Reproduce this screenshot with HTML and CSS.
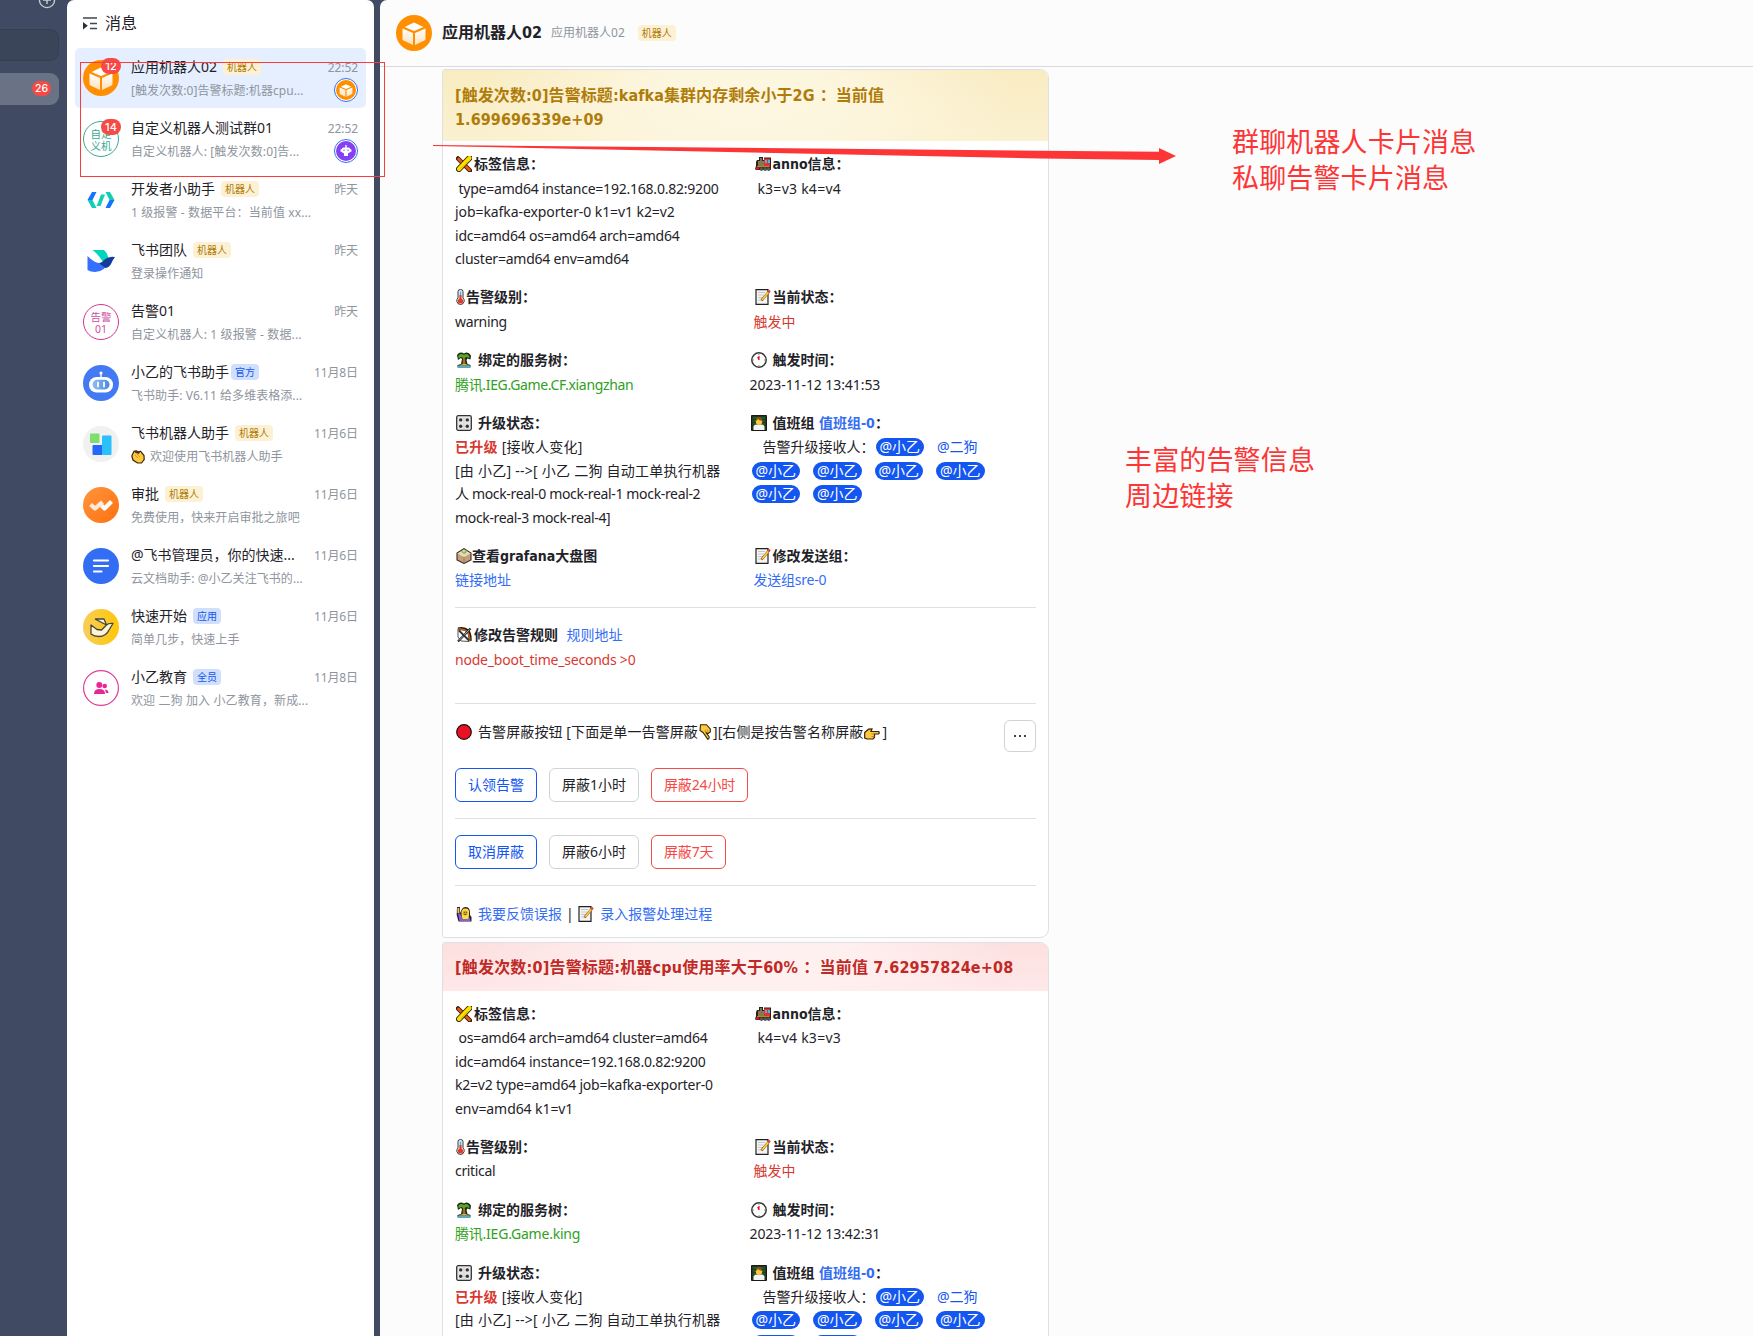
FILE: index.html
```html
<!DOCTYPE html>
<html lang="zh-CN">
<head>
<meta charset="utf-8">
<title>消息</title>
<link rel="stylesheet" href="styles.css">
</head>
<body>
<svg class="defs" aria-hidden="true">
  <defs>
    <linearGradient id="cubeFill" x1="0" y1="0" x2="0" y2="1"><stop offset="0" stop-color="#fff"/><stop offset="1" stop-color="#ffe0b8"/></linearGradient>
    <linearGradient id="approve" x1="0" y1="0" x2="1" y2="1"><stop offset="0" stop-color="#ff963d"/><stop offset="1" stop-color="#ff700f"/></linearGradient>
    <linearGradient id="start" x1="0" y1="0" x2="1" y2="0"><stop offset="0" stop-color="#f8ce57"/><stop offset="1" stop-color="#ffc60a"/></linearGradient>
    <linearGradient id="eyes" x1="0" y1="0" x2="1" y2="0"><stop offset="0" stop-color="#8fc0ee"/><stop offset="1" stop-color="#4a86e6"/></linearGradient>
  </defs>
  <symbol id="cube" viewBox="0 0 36 36">
    <circle cx="18" cy="18" r="18" fill="#ff8f00"/>
    <path d="M18 7.500 27.500 12 18 16 8.500 12z" fill="#fff"/>
    <path d="M6.500 13.500 17 18v12L7.500 25.500q-1-.5-1-1.500zM29.500 13.500 19 18v12l9.500-4.500q1-.5 1-1.500z" fill="url(#cubeFill)"/>
  </symbol>
  <symbol id="e-tag" viewBox="0 0 16 16">
    <path d="M2 2.500 14 14.500" stroke="#3a1d08" stroke-width="4.500" stroke-linecap="round"/>
    <path d="M2.500 3 13.500 14" stroke="#e8571b" stroke-width="2.600" stroke-linecap="round"/>
    <path d="M13.500 2 3 13" stroke="#3b2b00" stroke-width="6" stroke-linecap="round"/>
    <path d="M13.500 2 3 13" stroke="#fce100" stroke-width="4" stroke-linecap="round"/>
    <path d="M12 5.500 5 12.500" stroke="#d8a900" stroke-width="1"/>
  </symbol>
  <symbol id="e-train" viewBox="0 0 16 16">
    <path d="M2 4h2V1h4v3h1V1.500h7V14H1l-1-1 1-3V6z" fill="#2b211b"/>
    <path d="M3 5h6v5H3z" fill="#8b7748"/><path d="M5 2h2v3H5z" fill="#75716b"/>
    <path d="M9 2.500h6V11H9z" fill="#e0322f"/><path d="M10 4h2v3h-2zM13 4h2v3h-2z" fill="#46b7ee"/>
    <path d="M2 10h12v1.200H2z" fill="#a98a3c"/><path d="M1 11.500h3v2H1z" fill="#e81224"/>
    <circle cx="6.500" cy="13.200" r="1.700" fill="#555"/><circle cx="10.200" cy="13.200" r="1.700" fill="#555"/><circle cx="13.700" cy="13.200" r="1.700" fill="#555"/>
  </symbol>
  <symbol id="e-temp" viewBox="0 0 9 16">
    <path d="M2 2.500Q2 .5 4.500.5T7 2.500V9q1.500 1.200 1.200 3.300Q7.500 15.500 4.500 15.500T.8 12.300Q.6 10.200 2 9z" fill="#eef4f7" stroke="#222" stroke-width=".9"/>
    <path d="M4.500 2.500V12" stroke="#41b4e8" stroke-width="1.600"/><path d="M4.500 6v6" stroke="#e83525" stroke-width="2"/><circle cx="4.500" cy="12" r="2.600" fill="#e83525"/>
  </symbol>
  <symbol id="e-note" viewBox="0 0 16 16">
    <path d="M1 .7h12v14.600H1z" fill="#f4f4f4" stroke="#222" stroke-width="1.200"/>
    <path d="M3 3.500h7M3 6h6M3 8.500h5M3 11h3" stroke="#c8c8c8"/>
    <path d="M6.500 11.500 14 2.500" stroke="#6b4c08" stroke-width="2.500"/><path d="M7 11 13.500 3.200" stroke="#ffc83d" stroke-width="1.800"/><path d="M13.200 3.500 15 1.500" stroke="#e0484f" stroke-width="2.200"/>
  </symbol>
  <symbol id="e-palm" viewBox="0 0 16 16">
    <path d="M1 3Q4-1 8 1.500q4-2.500 7 2l-.5 4-3-1-1 1.500 1 4 3 1v2.500H1.500V13L5 12l1-5-1-1-3 2z" fill="#1d2a12"/>
    <path d="M2.500 3.500Q5 1 8 3q3-2.500 5.500 1.500l-.3 1.500L10.500 5 8 6.200 5 5 2.500 6.500z" fill="#57a829"/>
    <path d="M7 6h2l.6 6.500H6.500z" fill="#a46a2a"/><path d="M3 13.500Q8 10.500 13.500 13.500z" fill="#ffc83d"/><path d="M2 13.500h12.500V15H2z" fill="#35b7e0"/>
  </symbol>
  <symbol id="e-clock" viewBox="0 0 16 16">
    <circle cx="8" cy="8" r="7.200" fill="#fff" stroke="#383838" stroke-width="1.500"/>
    <path d="M8 8V4M8 8 6.700 5" stroke="#e81224" stroke-width="1.200"/><path d="M8 2v1M8 13v1M2 8h1M13 8h1" stroke="#888"/>
  </symbol>
  <symbol id="e-knob" viewBox="0 0 16 16">
    <rect x=".7" y=".7" width="14.600" height="14.600" rx="1.500" fill="#e6e6e6" stroke="#333" stroke-width="1.300"/>
    <g fill="#333"><circle cx="4.700" cy="4.900" r="1.700"/><circle cx="11.300" cy="4.900" r="1.700"/><circle cx="4.700" cy="11.300" r="1.700"/><circle cx="11.300" cy="11.300" r="1.700"/></g>
    <path d="M8 2.500v11" stroke="#bbb" stroke-dasharray="1 1"/>
  </symbol>
  <symbol id="e-teach" viewBox="0 0 16 16">
    <path d="M.5.5h15v15H.5z" fill="#1f3a1c" stroke="#191919"/><path d="M2 3h12M2 6h12M2 9h12" stroke="#3c7a35" stroke-width=".8"/>
    <path d="M2.500 15V11.500Q3 9.500 6 9.500h4q3 0 3.500 2V15z" fill="#f4f4f4"/><circle cx="8" cy="6.500" r="3.200" fill="#ffc83d"/><path d="M4.700 6Q5 2 8 2t3.300 4Q8 5.500 7 4 6 6 4.700 6z" fill="#8a5418"/>
  </symbol>
  <symbol id="e-pot" viewBox="0 0 16 16">
    <path d="M8 .7 15 5v7L8 15.500 1 12V5z" fill="#c2a07a" stroke="#3a2d20" stroke-width="1.100"/>
    <path d="M1.500 5.500 8 9l6.500-3.500L8 1.500z" fill="#ead9c0"/><path d="M8 9v6" stroke="#a27d56"/><path d="M8 6Q5.500 5 5.500 2.800 8 3 8 6 8 2.500 10.800 2.200 10.800 5 8 6" fill="#6cbf3b"/>
  </symbol>
  <symbol id="e-bow" viewBox="0 0 16 16">
    <path d="M2 2Q15-.5 14 14" fill="none" stroke="#26180e" stroke-width="3.200"/><path d="M2 2.200Q14 .5 13.700 14" fill="none" stroke="#c5631c" stroke-width="1.500"/>
    <path d="M2 2v8l3 4 8.500.500" fill="none" stroke="#555"/><path d="M2 14.500 14.500 1.500" stroke="#222" stroke-width="2.200"/><path d="M3 13.500 13.500 2.500" stroke="#ddd" stroke-width=".8"/><path d="M3 3.500 13 13.500" stroke="#333" stroke-width="1.800"/>
  </symbol>
  <symbol id="e-red" viewBox="0 0 16 16"><circle cx="8" cy="8" r="7.300" fill="#e81224" stroke="#26090c" stroke-width="1.200"/></symbol>
  <symbol id="e-down" viewBox="0 0 12 16">
    <path d="M1.500.7H7.500L11.300 5V8L9 9.500 6.800 8.500 10 12.500Q10.500 15 8.800 15.300L4 8.500 1 6.500z" fill="#ffc83d" stroke="#33260a" stroke-width="1.100"/><path d="M6.800 8.500 6 6M9 8 8 5.500" stroke="#a6761a" stroke-width=".8"/>
  </symbol>
  <symbol id="e-right" viewBox="0 0 16 12">
    <path d="M.7 4.500 4.500 1.200 8 1 7 3.500h7.500q1.500 1.200 0 2.500H10.500v3.500L9 11H3L.7 10z" fill="#ffc83d" stroke="#33260a" stroke-width="1.200"/><path d="M7.500 6H10.500M7.500 8.500h3" stroke="#a6761a" stroke-width=".8"/>
  </symbol>
  <symbol id="e-hand" viewBox="0 0 16 16">
    <path d="M1 1h3v6l2-4q2-3 6-1.500 2.500 2 2 7.500l1.500 2v4.500H2.500L.7 9z" fill="#2a1c3a"/><path d="M1.500 2h1.800v5H1.500z" fill="#ffc83d"/>
    <path d="M2 7.500h2l2 4h7.500L14.500 15H3.500z" fill="#8660cf"/><path d="M5.500 8Q5 2.500 9.500 2.500T13 8q.2 3.500-1 5H7Q5.500 11 5.500 8z" fill="#fce135"/><circle cx="9.200" cy="7" r="2.500" fill="#d89e2c"/><path d="M8 6.500h.8M10 6.500h.8M8.300 8.500h2" stroke="#553"/>
  </symbol>
  <symbol id="e-clap" viewBox="0 0 14 14">
    <path d="M.8 6 3 1.200 5 .8 7.500 2l2-.8L13 5.500l.2 4L10.500 13H6.500L2 10z" fill="#ffc83d" stroke="#33260a" stroke-width="1.200"/><path d="M3 1.500Q6 0 9 1.500L8 4 4.500 3z" fill="#5a2d14"/><path d="m4 5 3 3M6 4l3 3" stroke="#c98f20" stroke-width=".8"/>
  </symbol>
</svg>

<div class="app">
  <aside class="rail">
    <svg class="plus" width="18" height="9" viewBox="0 0 18 9"><circle cx="9" cy="0" r="7.600" fill="none" stroke="#c9cdd5" stroke-width="1.400"/><path d="M9 0v4M5 0h8" stroke="#c9cdd5" stroke-width="1.400"/></svg>
    <div class="search"></div>
    <div class="nav-item"><span class="count">26</span></div>
  </aside>

  <section class="inbox">
    <header class="inbox-head">
      <svg width="14" height="13" viewBox="0 0 14 13"><path d="M0 1h14M7 6.500h7M7 11.500h7" stroke="#41464f" stroke-width="1.500"/><path d="M0 5v7.500l4.800-3.750z" fill="#2b2f36"/></svg>
      <h1>消息</h1>
    </header>
    <ul class="threads">
      <li class="thread active">
        <div class="avatar"><svg width="36" height="36"><use href="#cube"/></svg><span class="count">12</span></div>
        <div class="info"><div class="row"><b>应用机器人02</b><i class="tag">机器人</i><time>22:52</time></div><p>[触发次数:0]告警标题:机器cpu...</p></div>
        <span class="sender"><svg width="20" height="20"><use href="#cube"/></svg></span>
      </li>
      <li class="thread">
        <div class="avatar ring teal">自定<br>义机<span class="count">14</span></div>
        <div class="info"><div class="row"><b>自定义机器人测试群01</b><time>22:52</time></div><p class="loose">自定义机器人: [触发次数:0]告...</p></div>
        <span class="sender"><svg width="20" height="20" viewBox="0 0 20 20"><circle cx="10" cy="10" r="10" fill="#8540f5"/><path d="M9.300 4h1.400v2.500H9.300zM6 7q4-1.500 8 0v1l1.500.5v2L14 11q-.5 1.300-2 1.300V15H8v-2.700q-1.500 0-2-1.300l-1.500-.5v-2L6 8z" fill="#fff"/><path d="M8 8.500v1.500M12 8.500v1.500" stroke="#8540f5"/></svg></span>
      </li>
      <li class="thread">
        <div class="avatar"><svg width="36" height="36" viewBox="0 0 36 36"><path d="M9 10h4.500L9.500 18h-5z" fill="#1673ff"/><path d="M4.500 18h5l4 8H9z" fill="#10cfb4"/><path d="M18 12.500h4L17.500 24h-3.800z" fill="#10cfb4"/><path d="M22.500 10H27l4.500 8h-5z" fill="#10cfb4"/><path d="M26.500 18h5L27 26h-4.500z" fill="#1673ff"/></svg></div>
        <div class="info"><div class="row"><b>开发者小助手</b><i class="tag">机器人</i><time>昨天</time></div><p class="loose">1 级报警 - 数据平台：当前值 xx...</p></div>
      </li>
      <li class="thread">
        <div class="avatar"><svg width="36" height="36" viewBox="0 0 36 36"><path d="M9.500 7H21q4 3.500 4 8l-5 4q-5-8-10.500-12z" fill="#00d6b9"/><path d="M4.500 13q7 7.500 14.500 7.500 4 0 7-2.500-4 11-14 11-4.500 0-7.500-2z" fill="#3370ff"/><path d="M16 20.300q3-.5 6-4 3.500-3.300 10-2.300-2 2.500-3.500 6-2 4.500-6 5z" fill="#133c9a"/></svg></div>
        <div class="info"><div class="row"><b>飞书团队</b><i class="tag">机器人</i><time>昨天</time></div><p>登录操作通知</p></div>
      </li>
      <li class="thread">
        <div class="avatar ring pink">告警<br>01</div>
        <div class="info"><div class="row"><b>告警01</b><time>昨天</time></div><p class="loose">自定义机器人: 1 级报警 - 数据...</p></div>
      </li>
      <li class="thread">
        <div class="avatar"><svg width="36" height="36" viewBox="0 0 36 36"><circle cx="18" cy="18" r="18" fill="#4379f2"/><circle cx="18" cy="8" r="1.600" fill="#fff"/><path d="M17.300 8h1.400v4h-1.400z" fill="#fff"/><rect x="6" y="12" width="24" height="15.500" rx="7.500" fill="#fff"/><rect x="9.500" y="14.700" width="17" height="9.800" rx="4.900" fill="url(#eyes)"/><path d="M15 17.500v4M21 17.500v4" stroke="#fff" stroke-width="1.800" stroke-linecap="round"/></svg></div>
        <div class="info"><div class="row"><b>小乙的飞书助手</b><i class="tag blue tight">官方</i><time class="md">11月8日</time></div><p>飞书助手: V6.11 给多维表格添...</p></div>
      </li>
      <li class="thread">
        <div class="avatar"><svg width="36" height="36" viewBox="0 0 36 36"><circle cx="18" cy="18" r="18" fill="#f1f1f1"/><rect x="7" y="7.500" width="9.500" height="9.500" rx="1" fill="#7ddf6e"/><rect x="19" y="9.500" width="9.500" height="19.500" rx="1" fill="#2cc0fb"/><path d="M10.500 19H19v10h-8.500q-1 0-1-1v-8q0-1 1-1z" fill="#2567fa"/></svg></div>
        <div class="info"><div class="row"><b>飞书机器人助手</b><i class="tag">机器人</i><time class="md">11月6日</time></div><p><svg class="clap" width="14" height="14"><use href="#e-clap"/></svg>欢迎使用飞书机器人助手</p></div>
      </li>
      <li class="thread">
        <div class="avatar"><svg width="36" height="36" viewBox="0 0 36 36"><circle cx="18" cy="18" r="18" fill="url(#approve)"/><path d="M7.500 17.500 12 21.500 19.500 15" fill="none" stroke="#ffe9d8" stroke-width="4.200" stroke-linejoin="round"/><path d="M18.500 18.500 21.500 21.500 28.500 14.500" fill="none" stroke="#fff" stroke-width="4.200" stroke-linejoin="round"/></svg></div>
        <div class="info"><div class="row"><b>审批</b><i class="tag">机器人</i><time class="md">11月6日</time></div><p>免费使用，快来开启审批之旅吧</p></div>
      </li>
      <li class="thread">
        <div class="avatar"><svg width="36" height="36" viewBox="0 0 36 36"><circle cx="18" cy="18" r="18" fill="#336df4"/><path d="M11 12.500h14M11 18h14M11 23.500h7.500" stroke="#fff" stroke-width="2.200" stroke-linecap="round"/></svg></div>
        <div class="info"><div class="row"><b>@飞书管理员，你的快速...</b><time class="md">11月6日</time></div><p>云文档助手: @小乙关注飞书的...</p></div>
      </li>
      <li class="thread">
        <div class="avatar"><svg width="36" height="36" viewBox="0 0 36 36"><circle cx="18" cy="18" r="18" fill="url(#start)"/><path d="M12 10h9l2.500 6q2-2 6.500-1.500l-4 6.500q-3 6.500-10 6.500-5 0-8-2.500V16l6 4.500 4.500.5 5-5L12 10" fill="#fdf3d5" stroke="#42463f" stroke-width="1.300" stroke-linejoin="round"/></svg></div>
        <div class="info"><div class="row"><b>快速开始</b><i class="tag blue">应用</i><time class="md">11月6日</time></div><p>简单几步，快速上手</p></div>
      </li>
      <li class="thread">
        <div class="avatar"><svg width="36" height="36" viewBox="0 0 36 36"><circle cx="18" cy="18" r="17.400" fill="#fff" stroke="#dd3f9a" stroke-width="1.200"/><circle cx="16.300" cy="15" r="3" fill="#ec2594"/><path d="M11 24q0-5 5.500-5t5.500 5z" fill="#ec2594"/><circle cx="21.700" cy="16" r="2.300" fill="#ec2594"/><path d="M22 19.500q3.300.3 3.500 3.500H23z" fill="#ec2594"/></svg></div>
        <div class="info"><div class="row"><b>小乙教育</b><i class="tag blue">全员</i><time class="md">11月8日</time></div><p class="loose">欢迎 二狗 加入 小乙教育，新成...</p></div>
      </li>
    </ul>
  </section>

  <main class="chat">
    <header class="chat-head">
      <svg width="36" height="36"><use href="#cube"/></svg>
      <h2>应用机器人02</h2><span class="alias">应用机器人02</span><i class="tag">机器人</i>
    </header>

    <article class="card warn">
      <h3>[触发次数:0]告警标题:kafka集群内存剩余小于2G ：当前值<br>1.699696339e+09</h3>
      <div class="card-body">
        <div class="pair">
          <div><h4><svg class="em" width="16" height="16"><use href="#e-tag"/></svg>标签信息：</h4><p class="lat">&nbsp;type=amd64 instance=192.168.0.82:9200<br><span class="even">job=kafka-exporter-0 k1=v1 k2=v2</span><br>idc=amd64 os=amd64 arch=amd64<br>cluster=amd64 env=amd64</p></div>
          <div class="indent"><h4><svg class="em" width="16" height="16"><use href="#e-train"/></svg>anno信息：</h4><p class="spaced">&nbsp;k3=v3 k4=v4</p></div>
        </div>
        <div class="pair">
          <div><h4><svg class="em slim" width="9" height="16"><use href="#e-temp"/></svg>告警级别：</h4><p class="narrow">warning</p></div>
          <div class="indent"><h4><svg class="em" width="16" height="16"><use href="#e-note"/></svg>当前状态：</h4><p class="red">触发中</p></div>
        </div>
        <div class="pair">
          <div><h4><svg class="em wide" width="16" height="16"><use href="#e-palm"/></svg>绑定的服务树：</h4><p class="green narrow">腾讯.IEG.Game.CF.xiangzhan</p></div>
          <div><h4><svg class="em wide" width="16" height="16"><use href="#e-clock"/></svg>触发时间：</h4><p class="even">2023-11-12 13:41:53</p></div>
        </div>
        <div class="pair">
          <div><h4><svg class="em wide" width="16" height="16"><use href="#e-knob"/></svg>升级状态：</h4><p><span class="spaced"><strong class="red">已升级</strong> [接收人变化]<br>[由 小乙] --&gt;[ 小乙 二狗 自动工单执行机器</span><br><span class="narrow">人 mock-real-0 mock-real-1 mock-real-2<br>mock-real-3 mock-real-4]</span></p></div>
          <div><h4><svg class="em wide" width="16" height="16"><use href="#e-teach"/></svg>值班组 <a>值班组-0</a>：</h4>
            <div class="mentions first"><span>告警升级接收人：</span><em>@小乙</em><a>@二狗</a></div>
            <div class="mentions"><em>@小乙</em><em>@小乙</em><em>@小乙</em><em>@小乙</em></div>
            <div class="mentions"><em>@小乙</em><em>@小乙</em></div>
          </div>
        </div>
        <div class="pair">
          <div><h4><svg class="em pot" width="16" height="16"><use href="#e-pot"/></svg>查看grafana大盘图</h4><p><a>链接地址</a></p></div>
          <div class="indent"><h4><svg class="em" width="16" height="16"><use href="#e-note"/></svg>修改发送组：</h4><p class="lat"><a>发送组sre-0</a></p></div>
        </div>
        <hr>
        <div class="rule"><h4><svg class="em" width="16" height="16"><use href="#e-bow"/></svg>修改告警规则 <a>规则地址</a></h4><p class="red lat">node_boot_time_seconds &gt;0</p></div>
        <hr>
        <div class="mute"><p><svg class="em wide" width="16" height="16"><use href="#e-red"/></svg>告警屏蔽按钮 [下面是单一告警屏蔽<svg class="down" width="12" height="16"><use href="#e-down"/></svg>][右侧是按告警名称屏蔽<svg class="right" width="16" height="12"><use href="#e-right"/></svg>]</p><button class="more"><svg width="12" height="2" viewBox="0 0 12 2"><path d="M0 0h2v2H0zM5 0h2v2H5zM10 0h2v2h-2z" fill="#41464f"/></svg></button></div>
        <div class="actions"><button class="primary">认领告警</button><button>屏蔽1小时</button><button class="danger">屏蔽24小时</button></div>
        <hr>
        <div class="actions"><button class="primary">取消屏蔽</button><button>屏蔽6小时</button><button class="danger">屏蔽7天</button></div>
        <hr>
        <p class="links"><svg class="em wide" width="16" height="16"><use href="#e-hand"/></svg><a>我要反馈误报</a><span class="bar">|</span><svg class="em wide" width="16" height="16"><use href="#e-note"/></svg><a>录入报警处理过程</a></p>
      </div>
    </article>

    <article class="card crit">
      <h3>[触发次数:0]告警标题:机器cpu使用率大于60% ：当前值 7.62957824e+08</h3>
      <div class="card-body">
        <div class="pair">
          <div><h4><svg class="em" width="16" height="16"><use href="#e-tag"/></svg>标签信息：</h4><p class="lat">&nbsp;os=amd64 arch=amd64 cluster=amd64<br>idc=amd64 instance=192.168.0.82:9200<br>k2=v2 type=amd64 job=kafka-exporter-0<br><span class="even">env=amd64 k1=v1</span></p></div>
          <div class="indent"><h4><svg class="em" width="16" height="16"><use href="#e-train"/></svg>anno信息：</h4><p class="spaced">&nbsp;k4=v4 k3=v3</p></div>
        </div>
        <div class="pair">
          <div><h4><svg class="em slim" width="9" height="16"><use href="#e-temp"/></svg>告警级别：</h4><p class="narrow">critical</p></div>
          <div class="indent"><h4><svg class="em" width="16" height="16"><use href="#e-note"/></svg>当前状态：</h4><p class="red">触发中</p></div>
        </div>
        <div class="pair">
          <div><h4><svg class="em wide" width="16" height="16"><use href="#e-palm"/></svg>绑定的服务树：</h4><p class="green lat">腾讯.IEG.Game.king</p></div>
          <div><h4><svg class="em wide" width="16" height="16"><use href="#e-clock"/></svg>触发时间：</h4><p class="even">2023-11-12 13:42:31</p></div>
        </div>
        <div class="pair">
          <div><h4><svg class="em wide" width="16" height="16"><use href="#e-knob"/></svg>升级状态：</h4><p class="spaced"><strong class="red">已升级</strong> [接收人变化]<br>[由 小乙] --&gt;[ 小乙 二狗 自动工单执行机器</p></div>
          <div><h4><svg class="em wide" width="16" height="16"><use href="#e-teach"/></svg>值班组 <a>值班组-0</a>：</h4>
            <div class="mentions first"><span>告警升级接收人：</span><em>@小乙</em><a>@二狗</a></div>
            <div class="mentions"><em>@小乙</em><em>@小乙</em><em>@小乙</em><em>@小乙</em></div>
            <div class="mentions"><em>@小乙</em><em>@小乙</em></div>
          </div>
        </div>
      </div>
    </article>
  </main>

  <div class="mark-box"></div>
  <svg class="mark-arrow" width="744" height="20" viewBox="0 0 744 20"><path d="M0 1v1l607 12.500 119 1.500v4l17-8-17-8v3.700l-119-1z" fill="#fc3636"/></svg>
  <p class="note note-a">群聊机器人卡片消息<br>私聊告警卡片消息</p>
  <p class="note note-b">丰富的告警信息<br>周边链接</p>
</div>
</body>
</html>
```
FILE: styles.css
```css
* { box-sizing: border-box; margin: 0; padding: 0; }
body {
  height: 1336px;
  overflow: hidden;
  background: #404b63;
  color: #1f2329;
  font: 14px/1.5 "Noto Sans", "Noto Sans CJK SC", sans-serif;
}
.defs { position: absolute; width: 0; height: 0; }
i, em { font-style: normal; }
a { color: #336df4; }
h1, h2, h3, h4 { font-size: inherit; white-space: nowrap; }
.app { position: relative; display: flex; height: 1336px; overflow: hidden; }

/* navigation rail */
.rail { width: 67px; flex: none; padding-right: 8px; background: #404b63; }
.plus { display: block; margin-left: 38px; height: 9px; }
.search { height: 32px; margin-top: 20px; border: 1px solid #353f52; border-left: 0; border-radius: 0 9px 9px 0; background: #3a4559; }
.nav-item { display: flex; align-items: center; justify-content: flex-end; height: 32px; margin-top: 12px; padding: 0 8px 1px 0; border-radius: 0 9px 9px 0; background: #6a7386; }
.count { display: block; padding: 0 3px; border-radius: 8px; background: #f54a45; color: #fff; font: 500 10.500px/15px Inter, sans-serif; }

/* conversation list */
.inbox { width: 307px; flex: none; border-radius: 7px 7px 0 0; background: #fff; }
.inbox-head { display: flex; align-items: center; gap: 8px; height: 48px; padding: 0 16px 2px; }
.inbox-head h1 { font-size: 16px; font-weight: 400; }
.threads { display: grid; gap: 1px; padding: 0 8px; list-style: none; }
.thread { position: relative; display: flex; gap: 12px; height: 60px; padding: 0 8px; border-radius: 5px; }
.thread.active { background: #e5efff; }
.avatar { position: relative; width: 36px; height: 36px; margin-top: 12px; flex: none; }
.avatar svg { display: block; }
.avatar .count { position: absolute; top: -2px; right: -2px; padding: 0 4px; font-size: 11px; line-height: 16px; min-width: 20px; text-align: center; }
.avatar.ring .count { top: -3px; right: -3px; }
.ring { padding-top: 6px; border: 1px solid; border-radius: 50%; font-size: 10.500px; line-height: 12px; text-align: center; white-space: nowrap; }
.teal { color: #38a793; }
.pink { color: #cf4d9f; border-color: #d6338f; }
.info { flex: 1; padding-top: 8px; white-space: nowrap; }
.row { display: flex; align-items: center; height: 22px; }
.row b { margin-top: -2px; font-weight: 400; }
.row time { margin: 1px 0 0 auto; color: #8f959e; font-size: 12px; letter-spacing: -.1px; }
.info p { margin-top: 3px; color: #8f959e; font-size: 12px; line-height: 20px; letter-spacing: .05px; }
.info .loose { letter-spacing: .12px; }
.clap { margin-right: 5px; vertical-align: -3px; }
.tag { margin-left: 6px; padding: 0 4px; border-radius: 4px; background: #fcf1d3; color: #b07a07; font-size: 10px; line-height: 16px; }
.tag.blue { background: #d0dffc; color: #1456f0; }
.tag.tight { margin-left: 2px; }
.sender { position: absolute; right: 8px; top: 30px; width: 24px; height: 24px; padding: 1px; border: 1px solid #336df4; border-radius: 50%; background: #fff; }
.sender svg { display: block; }

/* chat */
.chat { flex: 1; margin-left: 6px; border-radius: 7px 0 0 0; background: #fcfcfc; }
.chat-head { display: flex; align-items: center; height: 67px; padding: 0 16px; border-bottom: 1px solid #dadbdc; }
.chat-head h2 { margin-left: 10px; font: bold 16px/24px "DejaVu Sans Condensed", "Noto Sans CJK SC", sans-serif; }
.alias { margin-left: 9px; color: #8f959e; font-size: 12px; }
.chat-head .tag { margin-left: 13px; }

.card { width: 607px; margin: 2px 0 3.400px 62px; border: 1px solid #dee0e3; border-radius: 3px 9px 9px 3px; background: #fff; overflow: hidden; }
.card h3 { padding: 14px 12px 10px; font: bold 16px/24px "DejaVu Sans Condensed", "Noto Sans CJK SC", sans-serif; }
.card.warn h3 { padding-bottom: 9px; letter-spacing: .08px; color: #b07c09; background: radial-gradient(ellipse 270px 110px at 50% 45%, #fdf7e1 0, #fdf6df 35%, #fbf0cc00 100%), linear-gradient(#f9ecc2, #fbf1d0); }
.card.crit h3 { padding: 13px 12px 11px; letter-spacing: .19px; color: #c02a26; background: radial-gradient(ellipse 270px 90px at 50% 30%, #fff1f1 0, #fff0f0 35%, #fde3e200 100%), linear-gradient(#fddfdf, #fee9e8); }
.card-body { padding: 12.400px 12px 11.600px; line-height: 23.400px; white-space: nowrap; }
.pair { display: grid; grid-template-columns: 1fr 1fr; column-gap: 8px; margin-bottom: 16px; }
.pair:has(+ hr) { margin-bottom: 15px; }
.indent { padding-left: 4px; }
h4 { font-family: "DejaVu Sans Condensed", "Noto Sans CJK SC", sans-serif; }
.em { margin: 0 2px 0 1px; vertical-align: -3px; }
.em.wide { margin-right: 6px; }
.em.slim { margin-right: 1px; }
.em.pot { margin-right: 0; }
.lat { letter-spacing: -.22px; }
.even { letter-spacing: -.08px; }
.narrow { letter-spacing: -.34px; }
.spaced { letter-spacing: .25px; }
.red { color: #d83931; }
.green { color: #2ea121; }
.mentions { display: flex; align-items: center; gap: 13px; height: 23.400px; padding-left: 2px; }
.mentions.first { padding-left: 13px; }
.mentions.first span { margin-right: -12px; }
.mentions em { width: 48.500px; border-radius: 9px; background: #1456f0; color: #fff; line-height: 18px; text-align: center; }
.mentions a { color: #1456f0; }
hr { height: 1px; border: 0; background: #dee0e3; }
.rule { padding: 16.500px 0 32px; }
.rule h4 a { margin-left: 4px; font-weight: 400; }
.mute { display: flex; justify-content: space-between; padding-top: 16px; letter-spacing: .1px; }
.more { width: 32px; height: 32px; border: 1px solid #d0d3d6; border-radius: 6px; background: #fff; display: grid; place-items: center; }
.down { margin: 0 2px 0 1px; vertical-align: -3px; }
.right { margin: 0 2px 0 1px; vertical-align: -3px; }
.actions { display: flex; gap: 12px; padding: 16px 0; }
.actions button { height: 34px; padding: 0 12px; border: 1px solid #d0d3d6; border-radius: 6px; background: #fff; color: #1f2329; font: inherit; line-height: 32px; }
.actions .primary { border-color: #1456f0; color: #1456f0; }
.actions .danger { border-color: #f54a45; color: #f54a45; letter-spacing: -.15px; }
.links { padding-top: 16px; }
.bar { margin: 0 3.500px 0 4px; }

/* drawn annotations over the window */
.mark-box { position: absolute; left: 80px; top: 62px; width: 305px; height: 115px; border: 1px solid #fa3c3c; }
.mark-arrow { position: absolute; left: 433px; top: 144px; }
.note { position: absolute; color: #fc3636; font-size: 27px; line-height: 36px; letter-spacing: .15px; white-space: nowrap; }
.note-a { left: 1232px; top: 124px; }
.note-b { left: 1125px; top: 442px; }
```
